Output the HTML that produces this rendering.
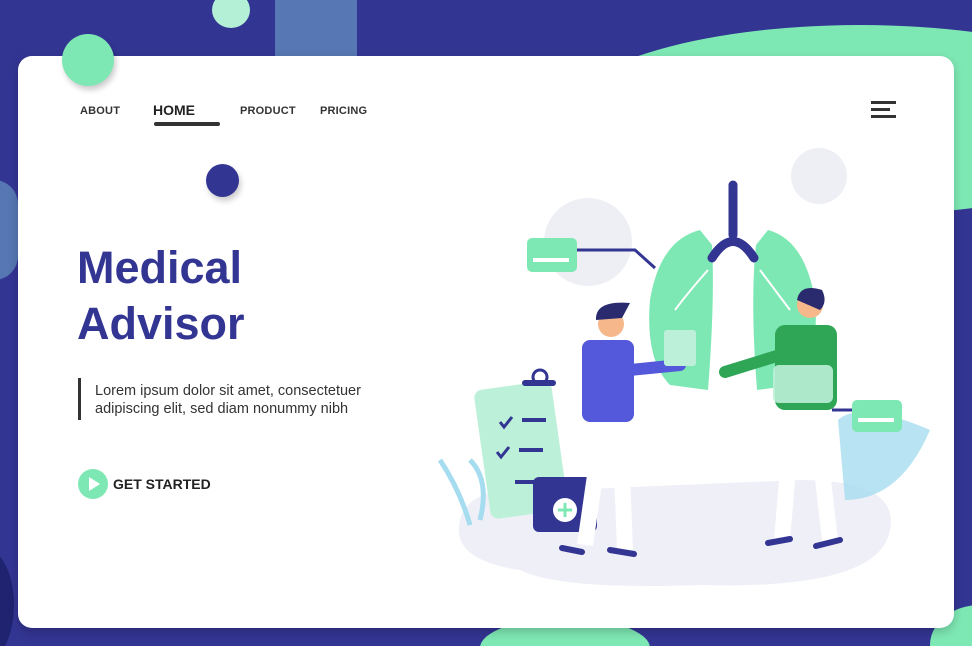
<!DOCTYPE html>
<html><head><meta charset="utf-8"><style>
*{margin:0;padding:0;box-sizing:border-box}
html,body{width:972px;height:646px;overflow:hidden}
body{background:#333593;font-family:"Liberation Sans",sans-serif}
#w{position:relative;width:972px;height:646px;overflow:hidden}
.a{position:absolute}
.card{left:18px;top:56px;width:936px;height:572px;background:#fff;border-radius:14px;box-shadow:0 4px 10px rgba(0,0,0,.2)}
.nav{font-size:11px;font-weight:bold;color:#333;letter-spacing:.2px}
</style></head><body><div id="w">
<div class="a" style="left:275px;top:-40px;width:82px;height:160px;background:#5677b3;border-radius:0 0 40px 40px"></div>
<div class="a" style="left:212px;top:-8px;width:38px;height:36px;border-radius:50%;background:#b3f0d6"></div>
<div class="a" style="left:560px;top:25px;width:600px;height:190px;border-radius:50%;background:#7ee8b4"></div>
<div class="a" style="left:930px;top:605px;width:100px;height:80px;border-radius:50%;background:#7ee8b4"></div>
<div class="a" style="left:-30px;top:180px;width:48px;height:100px;border-radius:30px;background:#5677b3"></div>
<div class="a" style="left:480px;top:618px;width:170px;height:60px;border-radius:50%;background:#7ee8b4"></div>
<div class="a" style="left:-40px;top:550px;width:54px;height:110px;border-radius:50%;background:#1f2370"></div>
<div class="a card"></div>
<div class="a" style="left:62px;top:34px;width:52px;height:52px;border-radius:50%;background:#7ee8b4;box-shadow:2px 4px 6px rgba(0,0,0,.2)"></div>
<div class="a" style="left:206px;top:164px;width:33px;height:33px;border-radius:50%;background:#333593;box-shadow:2px 4px 6px rgba(0,0,0,.2)"></div>
<div class="a nav" style="left:80px;top:105px">ABOUT</div>
<div class="a" style="left:153px;top:102px;font-size:14px;font-weight:bold;color:#222">HOME</div>
<div class="a" style="left:154px;top:122px;width:66px;height:4px;background:#333;border-radius:2px"></div>
<div class="a nav" style="left:240px;top:105px">PRODUCT</div>
<div class="a nav" style="left:320px;top:105px">PRICING</div>
<div class="a" style="left:871px;top:101px;width:25px;height:3px;background:#333"></div>
<div class="a" style="left:871px;top:108px;width:19px;height:3px;background:#333"></div>
<div class="a" style="left:871px;top:115px;width:25px;height:3px;background:#333"></div>
<div class="a" style="left:77px;top:240px;font-size:45px;font-weight:bold;color:#333593;line-height:56px">Medical<br>Advisor</div>
<div class="a" style="left:78px;top:378px;width:3px;height:42px;background:#333"></div>
<div class="a" style="left:95px;top:382px;font-size:14.5px;color:#333;line-height:18px">Lorem ipsum dolor sit amet, consectetuer<br>adipiscing elit, sed diam nonummy nibh</div>
<div class="a" style="left:78px;top:469px;width:30px;height:30px;border-radius:50%;background:#7ee8b4"></div>
<div class="a" style="left:89px;top:477px;width:0;height:0;border-left:11px solid #fff;border-top:7px solid transparent;border-bottom:7px solid transparent"></div>
<div class="a" style="left:113px;top:476px;font-size:14px;font-weight:bold;color:#222">GET STARTED</div>
<svg class="a" style="left:0;top:0" width="972" height="646">
<circle cx="819" cy="176" r="28" fill="#eeeef5"/>
<circle cx="588" cy="242" r="44" fill="#eeeef5"/>
<path d="M460 520 Q470 480 560 490 L800 480 Q900 480 890 530 Q880 590 700 585 Q560 590 520 570 Q450 560 460 520Z" fill="#efeff7"/>
<rect x="527" y="238" width="50" height="34" rx="5" fill="#7ee8b4"/>
<rect x="533" y="258" width="36" height="4" fill="#fff"/>
<path d="M577 250 L635 250 L655 268" stroke="#333593" stroke-width="3" fill="none"/>
<path d="M700 230 Q660 240 650 300 Q645 360 670 385 L708 390 Q715 300 712 245Z" fill="#7ee8b4"/>
<path d="M768 230 Q805 240 815 300 Q820 360 795 385 L757 390 Q750 300 756 245Z" fill="#7ee8b4"/>
<path d="M733 185 L733 235 M712 258 Q733 225 754 258" stroke="#333593" stroke-width="9" stroke-linecap="round" fill="none"/>
<path d="M708 270 Q690 290 675 310 M760 270 Q775 290 790 310" stroke="#fff" stroke-width="2" fill="none"/>
<rect x="482" y="385" width="78" height="130" rx="8" fill="#bdf0d8" transform="rotate(-8 520 450)"/>
<rect x="522" y="380" width="34" height="6" rx="3" fill="#333593"/>
<circle cx="540" cy="377" r="7" fill="none" stroke="#333593" stroke-width="3"/>
<path d="M500 422 l4 5 8-10 M497 452 l4 5 8-10" stroke="#333593" stroke-width="3" fill="none"/>
<path d="M522 420 h24 M519 450 h24 M515 482 h24" stroke="#333593" stroke-width="4"/>
<rect x="533" y="477" width="64" height="55" rx="6" fill="#333593"/>
<circle cx="565" cy="510" r="12" fill="#fff"/>
<path d="M565 503 v14 M558 510 h14" stroke="#7ee8b4" stroke-width="3"/>
<path d="M440 460 Q460 490 470 525 M480 520 Q490 480 470 460" stroke="#a6dcef" stroke-width="5" fill="none"/>
<path d="M603 420 L585 545 M620 420 L625 550" stroke="#fff" stroke-width="16"/>
<rect x="582" y="340" width="52" height="82" rx="8" fill="#5359da"/>
<path d="M630 370 L680 365" stroke="#5359da" stroke-width="12" stroke-linecap="round"/>
<circle cx="611" cy="324" r="13" fill="#f6b88a"/>
<path d="M596 320 Q595 300 630 303 L622 318Z" fill="#2a2b6e"/>
<rect x="664" y="330" width="32" height="36" rx="3" fill="#bdf0d8"/>
<path d="M562 548 l20 4 M610 550 l24 4" stroke="#333593" stroke-width="6" stroke-linecap="round"/>
<path d="M793 410 L782 540 M815 410 L830 540" stroke="#fff" stroke-width="16"/>
<rect x="775" y="325" width="62" height="85" rx="10" fill="#2fa556"/>
<path d="M780 355 L725 372" stroke="#2fa556" stroke-width="12" stroke-linecap="round"/>
<circle cx="810" cy="305" r="13" fill="#f6b88a"/>
<path d="M797 300 Q800 283 822 290 Q828 302 820 310Z" fill="#2a2b6e"/>
<rect x="773" y="365" width="60" height="38" rx="6" fill="#bdf0d8" opacity=".9"/>
<path d="M768 543 l22 -4 M816 546 l24 -6" stroke="#333593" stroke-width="6" stroke-linecap="round"/>
<path d="M838 420 Q860 400 930 430 Q900 500 845 500Z" fill="#a6dcef" opacity=".8"/>
<rect x="852" y="400" width="50" height="32" rx="5" fill="#7ee8b4"/>
<rect x="858" y="418" width="36" height="4" fill="#fff"/>
<path d="M832 410 h20" stroke="#333593" stroke-width="3"/>
</svg>
</div></body></html>
